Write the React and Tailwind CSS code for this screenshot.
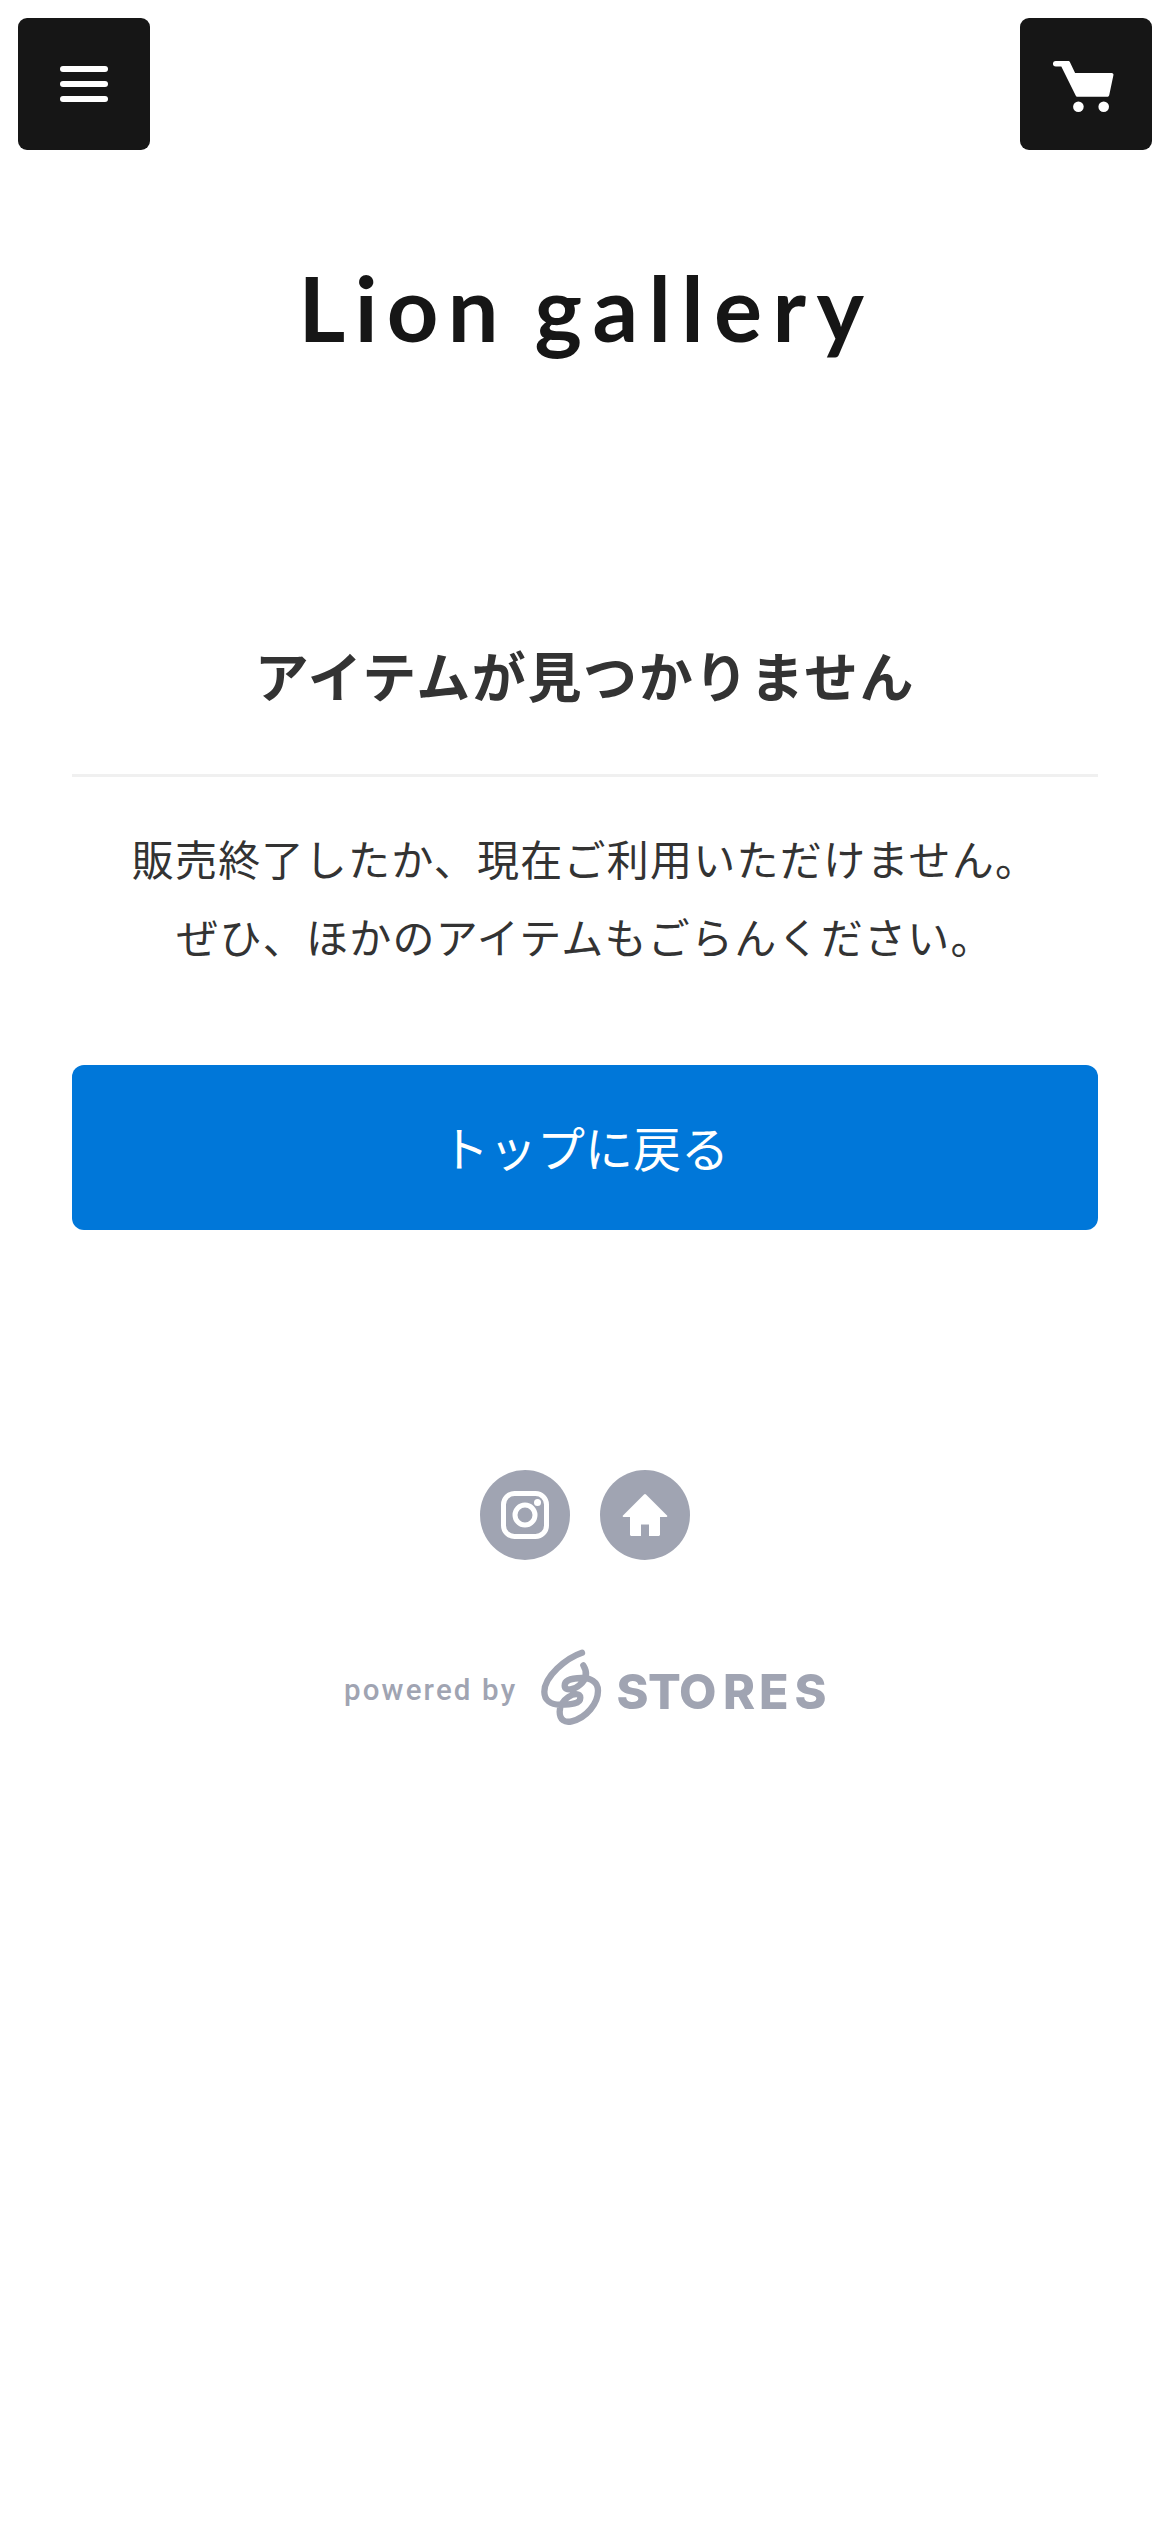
import { clsx } from 'clsx';

const JP_FONT = "font-['Noto_Sans_CJK_JP',sans-serif]";

function CartIcon() {
  return (
    <svg viewBox="0 0 62 54" className="h-[54px] w-[62px]" fill="#fff">
      <path d="M2.7 1h12.2c1 0 1.8.5 2.2 1.4l5 10.7h36.6c1.2 0 2 1 1.7 2.2L56.2 35.3c-.2.9-.9 1.5-1.8 1.5H24.6c-.8 0-1.5-.4-1.8-1.1L8.3 6.5H2.7A2.7 2.7 0 0 1 2.7 1z" />
      <circle cx="25.4" cy="46.8" r="5.3" />
      <circle cx="50.7" cy="46.8" r="5.3" />
    </svg>
  );
}

function InstagramIcon() {
  return (
    <svg viewBox="0 0 48 48" className="size-12" fill="none" stroke="#fff">
      <rect x="2.5" y="2.5" width="43" height="43" rx="11" strokeWidth="5" />
      <circle cx="24" cy="24" r="10" strokeWidth="5" />
      <circle cx="36.5" cy="11.5" r="3.5" fill="#fff" stroke="none" />
    </svg>
  );
}

function HomeIcon() {
  return (
    <svg viewBox="0 0 46 44" className="h-11 w-[46px]" fill="#fff">
      <path d="M22 1.4a1.4 1.4 0 0 1 2 0L45 22.5c.6.6.3 1.5-.5 1.5H38v17.5c0 .8-.7 1.5-1.5 1.5H27V31.5h-8V43H9.5C8.7 43 8 42.3 8 41.5V24H1.5C.7 24 .4 23.1 1 22.5z" />
    </svg>
  );
}

function StoresLogo() {
  return (
    <svg viewBox="0 0 286 80" className="h-20 w-[286px]" role="img" aria-label="STORES">
      <path
        transform="translate(-10 -7) scale(.33333)"
        d="M156 38C108 54 43 110 43 155C43 180 62 194 90 194C124 194 151 192 151 173C151 158 130 160 115 171C99 182 89 195 89 215C89 240 105 249 125 244C170 233 204 190 204 152C204 125 180 114 155 114C126 114 104 121 104 137C104 155 134 149 149 135C168 119 175 100 160 76"
        fill="none"
        stroke="#a0a4b2"
        strokeWidth="19"
        strokeLinecap="round"
        strokeLinejoin="round"
      />
      <text
        x="76.5 108 139 183 219 254.5"
        y="62"
        fill="#a0a4b2"
        className="font-['Inter',sans-serif] text-[48.5px] font-extrabold"
      >
        STORES
      </text>
    </svg>
  );
}

function Header() {
  return (
    <header className="flex justify-between p-[18px]">
      <button
        aria-label="menu"
        className="flex size-[132px] flex-col items-center justify-center gap-[9px] rounded-[9px] bg-[#161616]"
      >
        <span className="h-1.5 w-12 rounded-full bg-white" />
        <span className="h-1.5 w-12 rounded-full bg-white" />
        <span className="h-1.5 w-12 rounded-full bg-white" />
      </button>
      <button
        aria-label="cart"
        className="flex size-[132px] justify-center rounded-[9px] bg-[#161616] pt-[42px] pr-1"
      >
        <CartIcon />
      </button>
    </header>
  );
}

export default function App() {
  return (
    <div className={clsx('min-h-[2532px] bg-white text-[#333]', JP_FONT)}>
      <Header />

      <h1 className="mt-[85px] pl-[3px] text-center font-['Lato',sans-serif] text-[90px] leading-[108px] font-bold tracking-[9.3px] text-[#161616] [word-spacing:-4.5px]">
        Lion <span className="tracking-[10.4px]">gallery</span>
      </h1>

      <main className="mt-[273px] px-[72px] text-center">
        <h2 className="border-b-[3px] border-[#f0f0f0] pb-[59px] text-[54px] leading-[81px] font-bold tracking-[1.62px]">
          アイテムが見つかりません
        </h2>
        <p className="mt-[42px] text-[42px] leading-[78px] tracking-[1.26px]">
          販売終了したか、現在ご利用いただけません。
          <br />
          ぜひ、ほかのアイテムもごらんください。
        </p>
        <a className="mt-[90px] flex h-[165px] items-center justify-center rounded-xl bg-[#0077d9] pb-[3px] text-[48px] text-white">
          トップに戻る
        </a>
      </main>

      <footer className="mt-[240px] flex flex-col items-center">
        <div className="flex gap-[30px]">
          <a className="flex size-[90px] items-center justify-center rounded-full bg-[#a0a4b2]">
            <InstagramIcon />
          </a>
          <a className="flex size-[90px] items-center justify-center rounded-full bg-[#a0a4b2]">
            <HomeIcon />
          </a>
        </div>
        <div className="mt-[87px] flex items-center text-[#a0a4b2]">
          <span className="w-[196px] pt-[6px] font-['Roboto',sans-serif] text-[29.5px] font-medium tracking-[2.15px] whitespace-nowrap">
            powered by
          </span>
          <StoresLogo />
        </div>
      </footer>
    </div>
  );
}
